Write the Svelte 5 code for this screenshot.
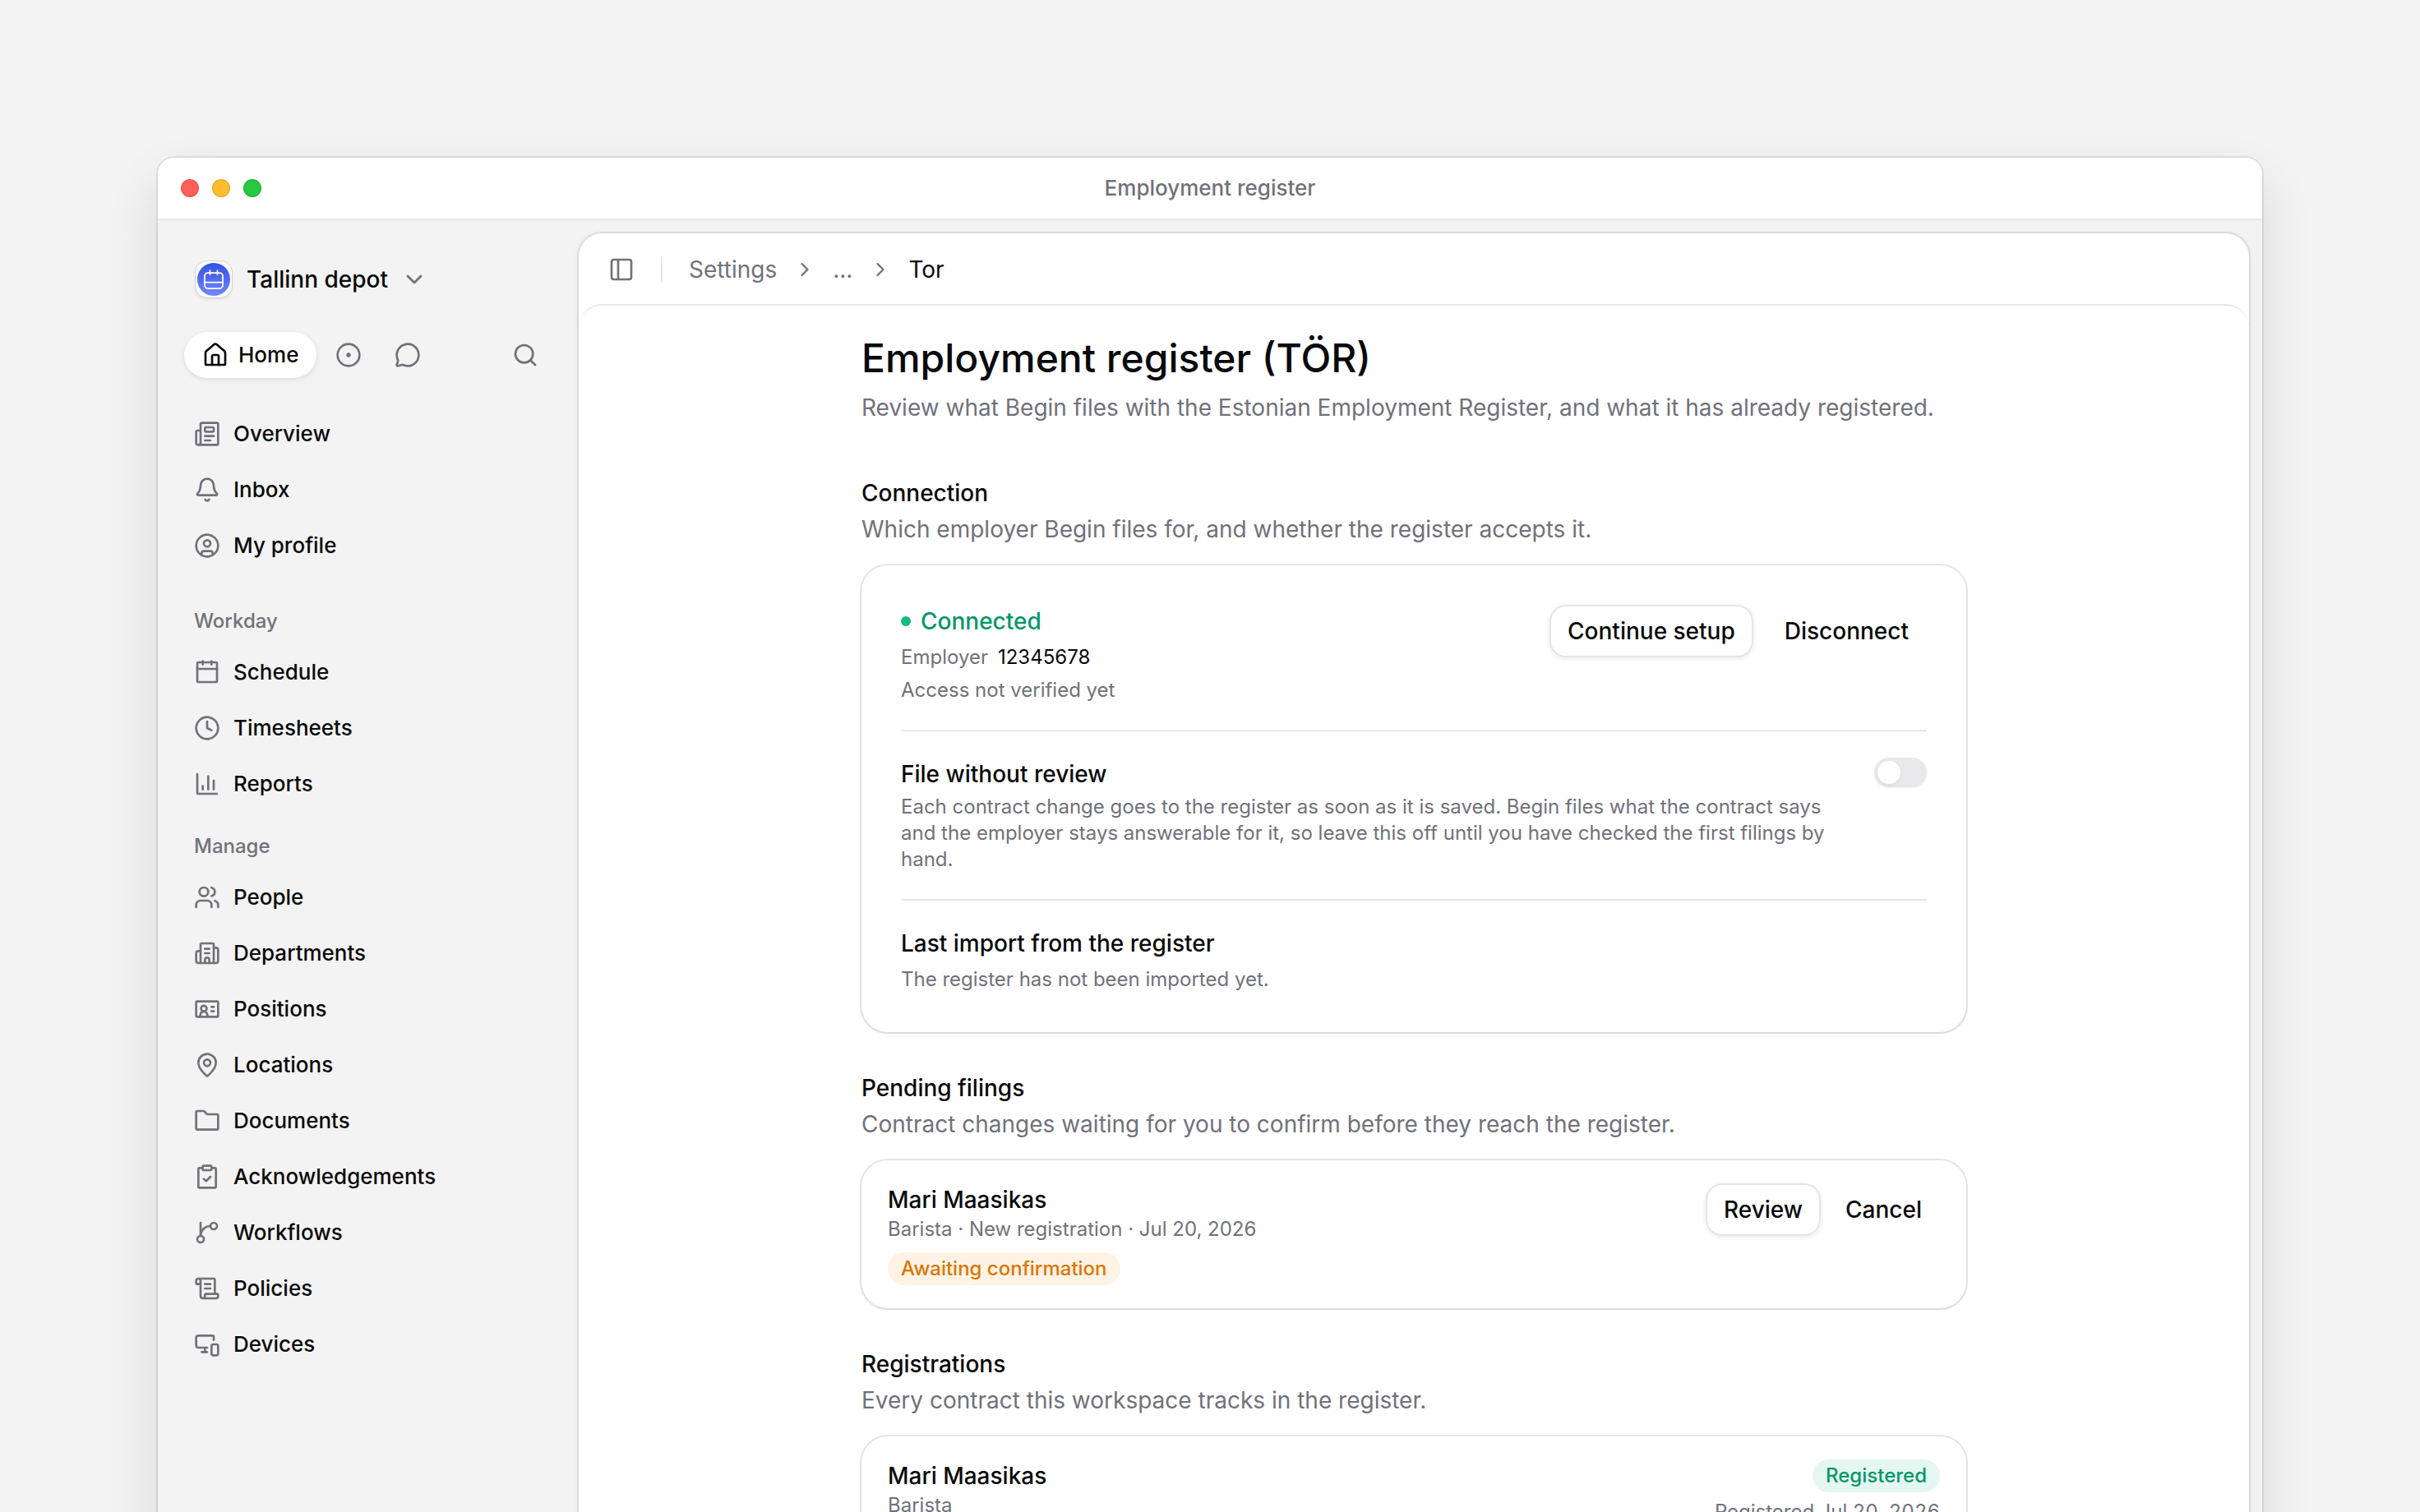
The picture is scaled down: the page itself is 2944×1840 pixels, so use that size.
<script lang="ts">
  interface NavItem {
    label: string;
    icon: string;
  }

  interface NavGroup {
    title?: string;
    items: NavItem[];
  }

  const icons: Record<string, string> = {
    home: '<path d="M15 21v-8a1 1 0 0 0-1-1h-4a1 1 0 0 0-1 1v8"/><path d="M3 10a2 2 0 0 1 .709-1.528l7-6a2 2 0 0 1 2.582 0l7 6A2 2 0 0 1 21 10v10a1 1 0 0 1-1 1H4a1 1 0 0 1-1-1z"/>',
    dot: '<circle cx="12" cy="12" r="10"/><circle cx="12" cy="12" r="1"/>',
    chat: '<path d="M2.992 16.342a2 2 0 0 1 .094 1.167l-1.065 3.29a1 1 0 0 0 1.236 1.168l3.413-.998a2 2 0 0 1 1.099.092 10 10 0 1 0-4.777-4.719"/>',
    search: '<circle cx="11" cy="11" r="8"/><path d="m21 21-4.34-4.34"/>',
    chevronDown: '<path d="m6 9 6 6 6-6"/>',
    chevronRight: '<path d="m9 18 6-6-6-6"/>',
    panel: '<rect x="3" y="3" width="18" height="18" rx="2"/><path d="M9 3v18"/>',
    overview: '<path d="M15 18h-5"/><path d="M18 14h-8"/><path d="M4 22h17a1 1 0 0 0 1-1V3a1 1 0 0 0-1-1H7a1 1 0 0 0-1 1v17a2 2 0 0 1-4 0v-10a1 1 0 0 1 1-1h3"/><rect x="10" y="6" width="8" height="4" rx="1"/>',
    bell: '<path d="M10.268 21a2 2 0 0 0 3.464 0"/><path d="M3.262 15.326A1 1 0 0 0 4 17h16a1 1 0 0 0 .74-1.673C19.41 13.956 18 12.499 18 8A6 6 0 0 0 6 8c0 4.499-1.411 5.956-2.738 7.326"/>',
    profile: '<circle cx="12" cy="12" r="10"/><circle cx="12" cy="10" r="3"/><path d="M7 20.662V19a2 2 0 0 1 2-2h6a2 2 0 0 1 2 2v1.662"/>',
    calendar: '<rect x="3" y="3" width="18" height="18" rx="1"/><path d="M3 9h18"/><path d="M8 2v3"/><path d="M16 2v3"/>',
    clock: '<circle cx="12" cy="12" r="10"/><path d="M12 6v6l4 2"/>',
    chart: '<path d="M3 3v17a1 1 0 0 0 1 1h17"/><path d="M18 17V9"/><path d="M13 17V5"/><path d="M8 17v-3"/>',
    people: '<path d="M16 21v-2a4 4 0 0 0-4-4H6a4 4 0 0 0-4 4v2"/><circle cx="9" cy="7" r="4"/><path d="M22 21v-2a4 4 0 0 0-3-3.87"/><path d="M16 3.13a4 4 0 0 1 0 7.75"/>',
    building: '<path d="M6 21V4a1 1 0 0 1 1-1h10a1 1 0 0 1 1 1v17"/><path d="M6 10H4a2 2 0 0 0-2 2v7a2 2 0 0 0 2 2h16a2 2 0 0 0 2-2V9a2 2 0 0 0-2-2h-2"/><path d="M10 8h4"/><path d="M10 12h4"/><path d="M10 21v-3a2 2 0 0 1 4 0v3"/>',
    idCard: '<rect x="2" y="5" width="20" height="14" rx="1"/><circle cx="9" cy="11.5" r="2.6"/><path d="M5.5 18.8c.3-2.8 1.7-4.6 3.5-4.6s3.2 1.8 3.5 4.6"/><path d="M16 10h2"/><path d="M16 14h2"/>',
    pin: '<path d="M20 10c0 4.993-5.539 10.193-7.399 11.799a1 1 0 0 1-1.202 0C9.539 20.193 4 14.993 4 10a8 8 0 0 1 16 0"/><circle cx="12" cy="10" r="3"/>',
    folder: '<path d="M21 20a1 1 0 0 0 1-1V7a1 1 0 0 0-1-1h-8.4a2 2 0 0 1-1.7-.9l-.8-1.2A2 2 0 0 0 8.43 3H3a1 1 0 0 0-1 1v15a1 1 0 0 0 1 1z"/>',
    clipboard: '<rect x="8" y="2" width="8" height="4" rx="1"/><path d="M16 4h3a1 1 0 0 1 1 1v16a1 1 0 0 1-1 1H5a1 1 0 0 1-1-1V5a1 1 0 0 1 1-1h3"/><path d="m9 14 2 2 4-4"/>',
    branch: '<path d="M6 3v12"/><circle cx="18" cy="6" r="3"/><circle cx="6" cy="18" r="3"/><path d="M15 6a9 9 0 0 0-9 9"/>',
    scroll: '<path d="M15 12h-5"/><path d="M15 8h-5"/><path d="M19 17V4a1 1 0 0 0-1-1H4"/><path d="M8 21h12a2 2 0 0 0 2-2v-1a1 1 0 0 0-1-1H11a1 1 0 0 0-1 1v1a2 2 0 1 1-4 0V5a2 2 0 1 0-4 0v2a1 1 0 0 0 1 1h3"/>',
    devices: '<path d="M18 8V5a1 1 0 0 0-1-1H4a2 2 0 0 0-2 2v7a2 2 0 0 0 2 2h8"/><path d="M10 19v-4"/><path d="M7 19h5"/><rect x="16" y="12" width="6" height="10" rx="1.5"/>'
  };

  const groups: NavGroup[] = [
    {
      items: [
        { label: 'Overview', icon: 'overview' },
        { label: 'Inbox', icon: 'bell' },
        { label: 'My profile', icon: 'profile' }
      ]
    },
    {
      title: 'Workday',
      items: [
        { label: 'Schedule', icon: 'calendar' },
        { label: 'Timesheets', icon: 'clock' },
        { label: 'Reports', icon: 'chart' }
      ]
    },
    {
      title: 'Manage',
      items: [
        { label: 'People', icon: 'people' },
        { label: 'Departments', icon: 'building' },
        { label: 'Positions', icon: 'idCard' },
        { label: 'Locations', icon: 'pin' },
        { label: 'Documents', icon: 'folder' },
        { label: 'Acknowledgements', icon: 'clipboard' },
        { label: 'Workflows', icon: 'branch' },
        { label: 'Policies', icon: 'scroll' },
        { label: 'Devices', icon: 'devices' }
      ]
    }
  ];

  let fileWithoutReview = $state(false);
</script>

{#snippet icon(name: string, small = false)}
  <svg class="icon" class:small viewBox="0 0 24 24" aria-hidden="true">{@html icons[name]}</svg>
{/snippet}

<div class="desktop">
  <div class="window">
    <header class="titlebar">
      <div class="lights">
        <span class="light close"></span>
        <span class="light minimize"></span>
        <span class="light zoom"></span>
      </div>
      <span class="window-title">Employment register</span>
    </header>

    <div class="shell">
      <aside class="sidebar">
        <button class="workspace">
          <span class="avatar">
            <span class="avatar-disc">
              <svg viewBox="0 0 24 24" aria-hidden="true">
                <rect x="1" y="4" width="22" height="19" rx="4" />
                <path d="M1 15.5h22M7.5 1v5M16.5 1v5" />
              </svg>
            </span>
          </span>
          <span>Tallinn depot</span>
          {@render icon('chevronDown')}
        </button>

        <div class="tabs">
          <button class="tab active">{@render icon('home')}Home</button>
          <button class="tab" aria-label="Activity">{@render icon('dot')}</button>
          <button class="tab" aria-label="Messages">{@render icon('chat')}</button>
          <button class="tab search" aria-label="Search">{@render icon('search')}</button>
        </div>

        <nav>
          {#each groups as group}
            <div class="group">
              {#if group.title}
                <h2 class="group-title">{group.title}</h2>
              {/if}
              <ul>
                {#each group.items as item}
                  <li><a class="nav-item" href="#{item.icon}">{@render icon(item.icon)}{item.label}</a></li>
                {/each}
              </ul>
            </div>
          {/each}
        </nav>
      </aside>

      <main class="panel">
        <div class="panel-header">
          <button class="panel-toggle" aria-label="Toggle sidebar">{@render icon('panel')}</button>
          <span class="separator"></span>
          <nav class="breadcrumbs" aria-label="Breadcrumb">
            <a href="#settings">Settings</a>
            {@render icon('chevronRight', true)}
            <span>...</span>
            {@render icon('chevronRight', true)}
            <span class="current">Tor</span>
          </nav>
        </div>

        <div class="panel-body">
          <div class="content">
            <div class="page-heading">
              <h1>Employment register (TÖR)</h1>
              <p>Review what Begin files with the Estonian Employment Register, and what it has already registered.</p>
            </div>

            <section>
              <h3>Connection</h3>
              <p class="lead">Which employer Begin files for, and whether the register accepts it.</p>
              <div class="card connection">
                <div class="row">
                  <div class="stack">
                    <div class="status"><span class="status-dot"></span>Connected</div>
                    <div class="meta employer">Employer <span class="value">12345678</span></div>
                    <div class="meta">Access not verified yet</div>
                  </div>
                  <div class="actions wide">
                    <button class="btn outline">Continue setup</button>
                    <button class="btn">Disconnect</button>
                  </div>
                </div>
                <div class="row">
                  <div class="stack tight">
                    <label class="name" for="file-without-review">File without review</label>
                    <p class="meta">
                      Each contract change goes to the register as soon as it is saved. Begin files what the contract says and
                      the employer stays answerable for it, so leave this off until you have checked the first filings by hand.
                    </p>
                  </div>
                  <input
                    id="file-without-review"
                    class="switch"
                    type="checkbox"
                    role="switch"
                    bind:checked={fileWithoutReview}
                  />
                </div>
                <div class="row">
                  <div class="stack">
                    <div class="name">Last import from the register</div>
                    <div class="meta">The register has not been imported yet.</div>
                  </div>
                </div>
              </div>
            </section>

            <section>
              <h3>Pending filings</h3>
              <p class="lead">Contract changes waiting for you to confirm before they reach the register.</p>
              <div class="card entry">
                <div>
                  <div class="name">Mari Maasikas</div>
                  <div class="meta">Barista · New registration · Jul 20, 2026</div>
                  <span class="badge pending">Awaiting confirmation</span>
                </div>
                <div class="actions">
                  <button class="btn outline">Review</button>
                  <button class="btn">Cancel</button>
                </div>
              </div>
            </section>

            <section>
              <h3>Registrations</h3>
              <p class="lead">Every contract this workspace tracks in the register.</p>
              <div class="card entry">
                <div>
                  <div class="name">Mari Maasikas</div>
                  <div class="meta">Barista</div>
                </div>
                <div class="outcome">
                  <span class="badge registered">Registered</span>
                  <div class="meta date">Registered Jul 20, 2026</div>
                </div>
              </div>
            </section>
          </div>
        </div>
      </main>
    </div>
  </div>
</div>

<style>
  :global(body) {
    background: #f3f3f3;
  }

  .desktop {
    --fg: #09090b;
    --muted: #71717a;
    --ring: rgba(0, 0, 0, 0.08);
    --line: #e8e8e9;
    box-sizing: border-box;
    height: 100vh;
    padding: 192px 192px 0;
    overflow: hidden;
    background: #f3f3f3;
    color: var(--fg);
    font-family: Inter, "Noto Sans", sans-serif;
    font-size: 28px;
    line-height: 40px;
    -webkit-font-smoothing: antialiased;
  }

  h1, h2, h3, p, ul {
    margin: 0;
    padding: 0;
    font-weight: 500;
  }

  ul {
    list-style: none;
  }

  a {
    color: inherit;
    text-decoration: none;
  }

  button {
    display: flex;
    align-items: center;
    padding: 0;
    border: 0;
    background: none;
    color: inherit;
    font: inherit;
    font-weight: 500;
    cursor: pointer;
  }

  .icon {
    flex: none;
    width: 32px;
    height: 32px;
    fill: none;
    stroke: currentColor;
    stroke-width: 2;
    stroke-linecap: round;
    stroke-linejoin: round;
  }

  .icon.small {
    width: 28px;
    height: 28px;
  }

  .window {
    display: flex;
    flex-direction: column;
    min-height: 100vh;
    border-radius: 20px;
    overflow: hidden;
    background: #f3f3f3;
    box-shadow: 0 0 0 2px var(--ring), 0 28px 64px rgba(0, 0, 0, 0.11);
  }

  .titlebar {
    display: grid;
    grid-template-columns: 1fr auto 1fr;
    align-items: center;
    height: 74px;
    padding: 0 28px;
    border-bottom: 2px solid var(--line);
    background: #fff;
  }

  .lights {
    display: flex;
    gap: 16px;
  }

  .light {
    width: 22px;
    height: 22px;
    border-radius: 50%;
    box-shadow: inset 0 0 0 1px rgba(0, 0, 0, 0.12);
  }

  .close {
    background: #ff5f57;
  }

  .minimize {
    background: #febc2e;
  }

  .zoom {
    background: #28c840;
  }

  .window-title {
    color: var(--muted);
    font-size: 26px;
    font-weight: 500;
  }

  .shell {
    display: flex;
    flex: 1;
  }

  .sidebar {
    box-sizing: border-box;
    flex: none;
    width: 512px;
    padding: 40px 32px;
  }

  .workspace {
    gap: 16px;
    height: 64px;
    padding: 0 12px;
  }

  .workspace .icon {
    color: var(--muted);
  }

  .avatar {
    display: grid;
    place-items: center;
    width: 44px;
    height: 44px;
    margin: 2px;
    border-radius: 14px;
    background: #fafafa;
    box-shadow: 0 0 0 1px rgba(0, 0, 0, 0.1), 0 2px 4px rgba(0, 0, 0, 0.08);
  }

  .avatar-disc {
    display: grid;
    place-items: center;
    width: 40px;
    height: 40px;
    border-radius: 50%;
    background: linear-gradient(#3151e0, #7388ff);
  }

  .avatar-disc svg {
    width: 24px;
    height: 24px;
    fill: none;
    stroke: #fff;
    stroke-width: 1.75;
    stroke-linecap: round;
  }

  .tabs {
    display: flex;
    gap: 6px;
    margin: 32px 0;
    color: var(--muted);
  }

  .tab {
    justify-content: center;
    width: 66px;
    height: 56px;
    border-radius: 28px;
  }

  .tab.active {
    gap: 12px;
    width: auto;
    padding: 0 22px;
    background: #fff;
    color: var(--fg);
    font-size: 26px;
    box-shadow: 0 2px 6px rgba(0, 0, 0, 0.1);
  }

  .search {
    margin-left: auto;
  }

  .group + .group {
    margin-top: 14px;
  }

  .group:first-child {
    padding: 4px 0 16px;
  }

  .group-title {
    padding: 0 12px;
    color: var(--muted);
    font-size: 24px;
    line-height: 60px;
  }

  .group ul {
    display: grid;
    gap: 4px;
  }

  .nav-item {
    display: flex;
    align-items: center;
    gap: 16px;
    height: 64px;
    padding: 0 12px;
    font-size: 26px;
    font-weight: 500;
  }

  .nav-item .icon {
    color: var(--muted);
  }

  .panel {
    flex: 1;
    min-width: 0;
    margin: 16px 16px 16px 0;
    border-radius: 28px;
    background: #fff;
    box-shadow: 0 0 0 2px var(--ring), 0 2px 12px rgba(0, 0, 0, 0.06);
  }

  .panel-header {
    display: flex;
    align-items: center;
    gap: 32px;
    height: 88px;
    padding: 0 36px;
    color: var(--muted);
  }

  .separator {
    width: 2px;
    height: 32px;
    background: var(--line);
  }

  .breadcrumbs {
    display: flex;
    align-items: center;
    gap: 20px;
  }

  .current {
    color: var(--fg);
  }

  .panel-body {
    margin-top: -2px;
    padding: 32px 48px 64px;
    border-top: 2px solid var(--line);
    border-radius: 28px;
  }

  .content {
    display: flex;
    flex-direction: column;
    gap: 48px;
    max-width: 1344px;
    margin: 0 auto;
  }

  .page-heading {
    margin-bottom: 16px;
  }

  .page-heading p,
  .lead {
    color: var(--muted);
    font-weight: 400;
  }

  h1 {
    margin-bottom: 8px;
    font-size: 48px;
    line-height: 64px;
  }

  h3 {
    margin-bottom: 4px;
    font-size: 28px;
  }

  .card {
    margin-top: 24px;
    border-radius: 32px;
    background: #fff;
    box-shadow: 0 0 0 2px rgba(0, 0, 0, 0.1), 0 2px 4px rgba(0, 0, 0, 0.05);
  }

  .connection {
    padding: 16px 48px;
  }

  .row {
    display: flex;
    justify-content: space-between;
    align-items: flex-start;
    gap: 32px;
    padding: 32px 0;
  }

  .row + .row {
    border-top: 2px solid var(--line);
  }

  .stack {
    display: grid;
    gap: 8px;
  }

  .stack.tight {
    gap: 4px;
  }

  .name {
    font-weight: 500;
  }

  .meta {
    color: var(--muted);
    font-size: 24px;
    font-weight: 400;
    line-height: 32px;
  }

  .date {
    font-variant-numeric: tabular-nums;
  }

  .employer {
    display: flex;
    gap: 12px;
  }

  .value {
    color: var(--fg);
  }

  .status {
    display: flex;
    align-items: center;
    gap: 12px;
    color: #059669;
    font-weight: 500;
  }

  .status-dot {
    width: 12px;
    height: 12px;
    border-radius: 50%;
    background: #10b981;
  }

  .actions {
    display: flex;
    flex: none;
    gap: 8px;
  }

  .actions.wide {
    gap: 16px;
  }

  .btn {
    height: 64px;
    padding: 0 22px;
    border-radius: 20px;
  }

  .btn.outline {
    background: #fff;
    box-shadow: inset 0 0 0 2px rgba(0, 0, 0, 0.1), 0 2px 6px rgba(0, 0, 0, 0.08);
  }

  .switch {
    appearance: none;
    display: flex;
    flex: none;
    width: 64px;
    height: 36px;
    margin: 0;
    padding: 4px;
    border-radius: 18px;
    background: #e9e9eb;
    box-shadow: 0 1px 3px rgba(0, 0, 0, 0.06);
    cursor: pointer;
  }

  .switch::before {
    content: "";
    width: 28px;
    height: 28px;
    border-radius: 50%;
    background: #fff;
    box-shadow: 0 2px 4px rgba(0, 0, 0, 0.06);
  }

  .switch:checked {
    justify-content: flex-end;
    background: #10b981;
  }

  .entry {
    display: flex;
    justify-content: space-between;
    align-items: flex-start;
    padding: 28px 32px;
  }

  .badge {
    display: block;
    width: fit-content;
    padding: 0 16px;
    border-radius: 20px;
    font-size: 24px;
    font-weight: 500;
  }

  .pending {
    margin-top: 12px;
    background: #fef3e4;
    color: #d97706;
  }

  .registered {
    background: #e5f7f1;
    color: #059669;
  }

  .outcome {
    display: grid;
    justify-items: end;
    gap: 8px;
  }
</style>
